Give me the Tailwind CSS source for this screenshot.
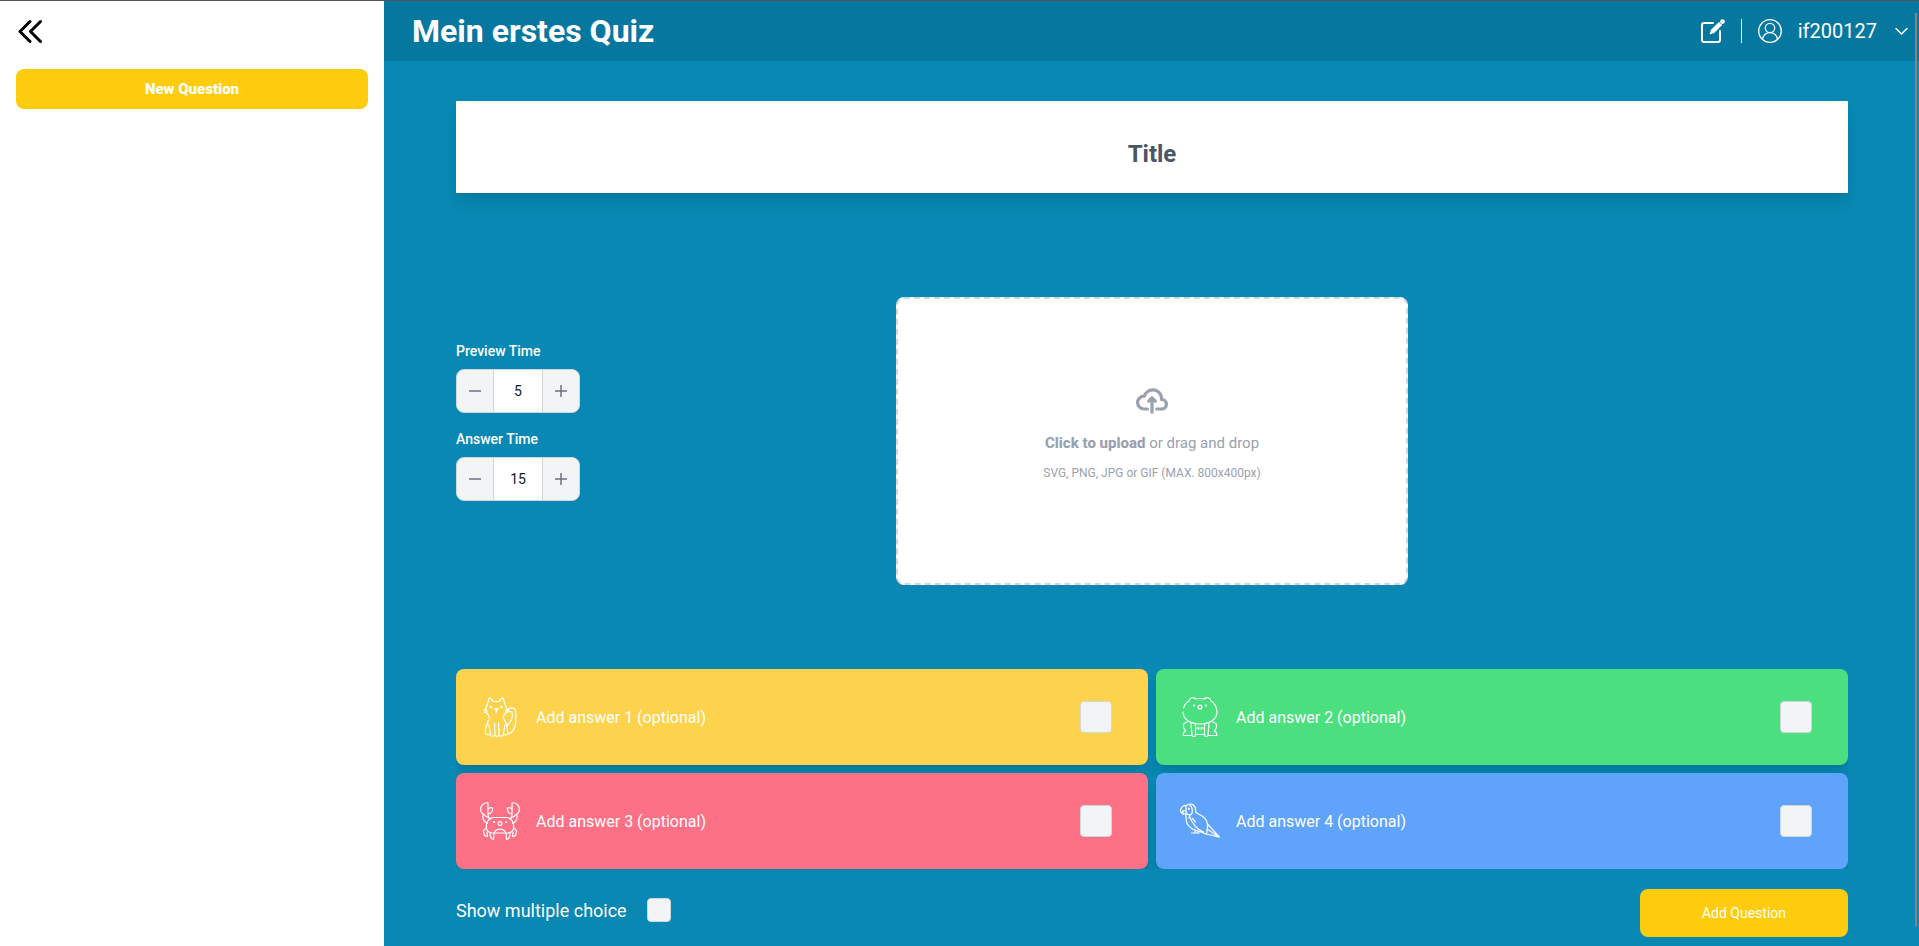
<!DOCTYPE html>
<html lang="de">
<head>
<meta charset="utf-8">
<meta name="viewport" content="width=device-width, initial-scale=1">
<title>Mein erstes Quiz</title>
<script src="https://cdn.jsdelivr.net/npm/@tailwindcss/browser@4"></script>
</head>
<body class="relative flex min-h-screen border-t border-[#52525e] bg-[#0888b2] font-['Roboto',sans-serif] text-white">
  <aside class="flex w-96 shrink-0 flex-col bg-white px-4 pt-4">
    <button type="button" aria-label="Collapse sidebar" class="flex h-7 w-7 items-center justify-center text-black">
      <svg class="h-6 w-7" viewBox="0 0 28 24" fill="none" stroke="currentColor" stroke-width="3" stroke-linecap="round" stroke-linejoin="round"><path d="M14 2.500 4 12.500l10 10M24.500 2.500l-10 10 10 10"/></svg>
    </button>
    <button type="button" class="mt-6 h-10 rounded-lg bg-[#fdcc0c] text-[15px] font-black">New Question</button>
  </aside>

  <div class="flex min-w-0 flex-1 flex-col">
    <header class="flex h-15 items-center justify-between bg-[#06789f] pr-2.5 pl-7">
      <h1 class="text-[32px] leading-9 font-bold">Mein erstes Quiz</h1>
      <div class="flex items-center gap-4">
        <button type="button" aria-label="Edit">
          <svg class="size-6" viewBox="0 0 24 24" fill="none" stroke="currentColor" stroke-width="2" stroke-linecap="round" stroke-linejoin="round"><path d="M12 4H3a2 2 0 0 0-2 2v15a2 2 0 0 0 2 2h14a2 2 0 0 0 2-2v-9"/><path d="m8.500 15.500 1.500-4.700L18 2.900l3.200 3.200-8 8z" fill="currentColor" stroke="none"/><circle cx="21.500" cy="2.600" r="2.400" fill="currentColor" stroke="none"/></svg>
        </button>
        <div class="h-6 w-px bg-white"></div>
        <button type="button" class="flex items-center gap-4 text-xl">
          <svg class="size-6" viewBox="0 0 24 24" fill="none" stroke="currentColor" stroke-width="1.300"><circle cx="12" cy="12" r="11.300"/><circle cx="12" cy="9" r="4.700"/><path d="M4.500 20c1-4 4-6.300 7.500-6.300s6.500 2.300 7.500 6.300"/></svg>
          <span>if200127</span>
          <svg class="h-4 w-4" viewBox="0 0 16 16" fill="none" stroke="currentColor" stroke-width="1.500" stroke-linecap="round" stroke-linejoin="round"><path d="m3 5.500 5.500 5.500L14 5.500"/></svg>
        </button>
      </div>
    </header>

    <main class="flex flex-1 flex-col pt-10 pr-[71px] pl-18">
      <input type="text" aria-label="Title" placeholder="Title" class="h-23 w-full bg-white px-4 pt-3.5 text-center text-2xl font-bold text-gray-600 shadow-lg placeholder:text-gray-600">

      <section class="mt-26 grid grid-cols-[1fr_512px_1fr]">
        <div class="pt-11">
          <label for="preview" class="mb-2 block text-sm font-medium">Preview Time</label>
          <div class="flex h-11 w-31 overflow-hidden rounded-lg border border-gray-300 bg-gray-100 text-gray-500">
            <button type="button" aria-label="Decrease preview time" class="flex w-9 items-center justify-center"><svg class="size-3" viewBox="0 0 12 12" stroke="currentColor" stroke-width="1.500"><path d="M0 6h12"/></svg></button>
            <input id="preview" type="text" value="5" class="min-w-0 flex-1 border-x border-gray-300 bg-white text-center text-sm text-gray-900">
            <button type="button" aria-label="Increase preview time" class="flex w-9 items-center justify-center"><svg class="size-3" viewBox="0 0 12 12" stroke="currentColor" stroke-width="1.500"><path d="M0 6h12M6 0v12"/></svg></button>
          </div>
          <label for="answer" class="mt-4 mb-2 block text-sm font-medium">Answer Time</label>
          <div class="flex h-11 w-31 overflow-hidden rounded-lg border border-gray-300 bg-gray-100 text-gray-500">
            <button type="button" aria-label="Decrease answer time" class="flex w-9 items-center justify-center"><svg class="size-3" viewBox="0 0 12 12" stroke="currentColor" stroke-width="1.500"><path d="M0 6h12"/></svg></button>
            <input id="answer" type="text" value="15" class="min-w-0 flex-1 border-x border-gray-300 bg-white text-center text-sm text-gray-900">
            <button type="button" aria-label="Increase answer time" class="flex w-9 items-center justify-center"><svg class="size-3" viewBox="0 0 12 12" stroke="currentColor" stroke-width="1.500"><path d="M0 6h12M6 0v12"/></svg></button>
          </div>
        </div>
        <label class="flex h-72 cursor-pointer flex-col items-center justify-center rounded-lg border-2 border-dashed border-gray-300 bg-white pb-6 text-gray-400">
          <svg class="mt-2 mb-4 size-8" viewBox="0 0 20 16" fill="none" stroke="currentColor" stroke-width="2" stroke-linecap="round" stroke-linejoin="round"><path d="M13 13h3a3 3 0 0 0 0-6h-.025A5.560 5.560 0 0 0 16 6.500 5.500 5.500 0 0 0 5.207 5.021C5.137 5.017 5.071 5 5 5a4 4 0 0 0 0 8h2.167M10 15V6m0 0L8 8m2-2 2 2"/></svg>
          <span class="mb-2 text-[15px] leading-5"><span class="font-extrabold">Click to upload</span> or drag and drop</span>
          <span class="mt-1 text-xs">SVG, PNG, JPG or GIF (MAX. 800x400px)</span>
          <input type="file" class="sr-only">
        </label>
      </section>

      <section class="mt-21 grid grid-cols-2 gap-2 overflow-hidden">
        <div class="flex h-24 items-center rounded-lg bg-[#fdd34d] pr-9 pl-6 shadow-lg">
          <svg class="size-10" viewBox="0 0 40 40" fill="none" stroke="currentColor" stroke-width="1.200" stroke-linecap="round" stroke-linejoin="round"><path d="M8.500 18.500 9.500 21M8.500 18 5 14l2.500-7.500L9.500 1c1.500-.6 2.500 1.500 3.500 3.500h6.500C20.500 2.500 21.500.4 23 1l1.800 5.500L27.500 14 24 18l-.8 3M4 12.500l3 1M4.500 15.500l2.500-.8M28.500 12.500l-3 1M28 15.500l-2.500-.8"/><path d="M8.500 23 5.500 32v4.500c1 1.500 3.500 1.500 5 1L9 27.500M10.500 37.500c.5 2.400 4.300 2.400 4.500 0L14.500 26M15 38c.5 1.800 3.500 1.800 4 0L18.500 26M19 38c.8 1.800 3.800 1.500 4.300-.5L25 28M24 22l2.500 5 1.500 10c-1.500.8-3.500.8-4.700.5M28 37c5-1 7.800-7 7.800-13V16c0-3-1-5-3.800-5.200-3 0-4 2-3.500 3.200.8 1.400 2.500 0 3.300 1 1.400 4-.8 9.500-4.600 13.500"/><path d="M14.800 11.800h3l-1.500 1.700zM16.300 13.500v2"/><circle cx="11" cy="10" r=".7" fill="currentColor"/><circle cx="21.500" cy="10" r=".7" fill="currentColor"/></svg>
          <input type="text" aria-label="Answer 1" placeholder="Add answer 1 (optional)" class="mx-4 min-w-0 flex-1 pt-0.5 text-base placeholder:text-white">
          <input type="checkbox" aria-label="Answer 1 is correct" class="size-8 appearance-none rounded-sm border border-gray-300 bg-gray-100">
        </div>
        <div class="flex h-24 items-center rounded-lg bg-[#4bdf80] pr-9 pl-6 shadow-lg">
          <svg class="size-10" viewBox="0 0 40 40" fill="none" stroke="currentColor" stroke-width="1.200" stroke-linecap="round" stroke-linejoin="round"><path d="M3.500 11C4.500 7.500 7 5 9 4c.5-3.500 4.500-4.500 7-2 2.500-.6 5.500-.6 8 0 2.500-2.500 6.500-1.500 7 2 3 1.500 6 6 6 11 0 7.500-7.500 12-17 12S3 22.500 3 15"/><circle cx="20" cy="10" r="1.900"/><circle cx="14" cy="8.500" r=".5" fill="currentColor"/><circle cx="26" cy="8.500" r=".5" fill="currentColor"/><path d="M7.500 25C4.500 25 3 27.500 3.500 30c.3 2 2 2.500 2 4.500-1.500 0-2.300 1-2.200 4H12M32.500 25c3 0 4.500 2.500 4 5-.3 2-2 2.500-2 4.500 1.500 0 2.300 1 2.200 4H28M11 26l1 12.500c.5 1.500 3 1.500 3.500 0V27M29 26l-1 12.500c-.5 1.500-3 1.500-3.500 0V27M15.500 37.500h9M16 31h8M18.500 31v1.500M21.500 31v1.500"/></svg>
          <input type="text" aria-label="Answer 2" placeholder="Add answer 2 (optional)" class="mx-4 min-w-0 flex-1 pt-0.5 text-base placeholder:text-white">
          <input type="checkbox" aria-label="Answer 2 is correct" class="size-8 appearance-none rounded-sm border border-gray-300 bg-gray-100">
        </div>
        <div class="flex h-24 items-center rounded-lg bg-[#fd7186] pr-9 pl-6 shadow-lg">
          <svg class="size-10" viewBox="0 0 40 40" fill="none" stroke="currentColor" stroke-width="1.200" stroke-linecap="round" stroke-linejoin="round"><path d="M6.500 28C5.500 21 9 16.500 14 16.500h12c5 0 8.500 4.500 7.500 11.500-1 2.500-3 4-6 4H13c-3 0-5.500-1.500-6.500-4z"/><circle cx="20" cy="22.500" r="1.900"/><circle cx="14" cy="21" r=".5" fill="currentColor"/><circle cx="26" cy="21" r=".5" fill="currentColor"/><path d="M14.500 31.500c2-4.500 9-4.500 11 0M8 16.500C6.500 16 5 15 4.500 14 1.500 12.500.5 10 .7 7.500 1 4 4 1.500 8 1.800V13M8.500 7.800c1.500-1.600 4-1.400 4.200 0-.3 3.200-2 5.200-4.700 5.200M3 14.500c-.5 4 1 6.500 4.500 8M8 14c0 2 .8 3.500 2.500 4M32 16.500c1.500-.5 3-1.500 3.500-2.500 3-1.500 4-4 3.800-6.500C39 4 36 1.500 32 1.800V13M31.500 7.800c-1.500-1.600-4-1.400-4.200 0 .3 3.200 2 5.200 4.700 5.200M37 14.500c.5 4-1 6.500-4.500 8M32 14c0 2-.8 3.500-2.500 4M6 27.500C3.500 28.500 3 30.500 4 32M4 32.500c0 2 1.500 3 3.500 3L7 31M34 27.500c2.500 1 3 3 2 4.500M36 32.500c0 2-1.500 3-3.500 3L33 31M10.500 32c-1 2 0 6 3 6.500l.5-6.500M29.500 32c1 2 0 6-3 6.500L26 32"/></svg>
          <input type="text" aria-label="Answer 3" placeholder="Add answer 3 (optional)" class="mx-4 min-w-0 flex-1 pt-0.5 text-base placeholder:text-white">
          <input type="checkbox" aria-label="Answer 3 is correct" class="size-8 appearance-none rounded-sm border border-gray-300 bg-gray-100">
        </div>
        <div class="flex h-24 items-center rounded-lg bg-[#60a3fb] pr-9 pl-6 shadow-lg">
          <svg class="size-10" viewBox="0 0 40 40" fill="none" stroke="currentColor" stroke-width="1.200" stroke-linecap="round" stroke-linejoin="round"><path d="M6.500 4.500C3 4 .5 6.500.6 10.500l1 1.500 1.400-2.200 3-.3M3 10v3.500l3-1M6 12.500V4.800C7.500 3.500 9 3 11 3.200c3.500.6 5 3.800 4.700 8.300l6.800 3.800c3.500 2.500 5.500 6 5 11l-1 7-6-2.500c-6-1-12-4.500-13.500-8.500-1-3-1.200-6-1-9.800M6.500 12c2 3 5.500 2.500 5.800-1.500.2-3-.8-5.500-3.300-7M9.500 15.500c2 5 6 12.500 14 15.500M10 14l-1 3M12.500 17.500l3 3.500M27 22.500l12.500 13.700-13-3.200M27 28l12.500 8.200M15 28v3.500M18 29.500v2.500M11.500 32H19"/><circle cx="8.800" cy="7.800" r=".5" fill="currentColor"/></svg>
          <input type="text" aria-label="Answer 4" placeholder="Add answer 4 (optional)" class="mx-4 min-w-0 flex-1 pt-0.5 text-base placeholder:text-white">
          <input type="checkbox" aria-label="Answer 4 is correct" class="size-8 appearance-none rounded-sm border border-gray-300 bg-gray-100">
        </div>
      </section>

      <section class="mt-5 flex items-start justify-between">
        <div class="flex items-center gap-5 pt-2">
          <label for="multi" class="pt-0.5 text-lg leading-6">Show multiple choice</label>
          <input id="multi" type="checkbox" class="size-6 appearance-none rounded-sm border border-gray-300 bg-gray-100">
        </div>
        <button type="button" class="h-12 w-52 rounded-lg bg-[#fdcc0c] text-sm">Add Question</button>
      </section>
    </main>
  </div>
  <!-- Scroll thumb overlaying the page edge -->
  <div class="absolute top-3 right-0.5 bottom-5 w-0.5 bg-[#848486]"></div>
</body>
</html>
